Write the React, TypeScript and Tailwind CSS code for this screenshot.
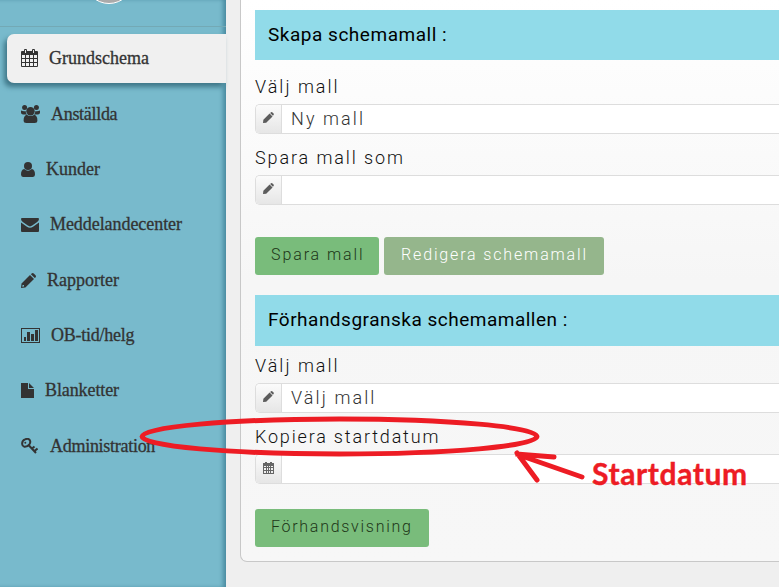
import React from 'react';

const ink = '#333333';

function Icon({ w, h, children }: { w: number; h: number; children: React.ReactNode }) {
  return (
    <svg width={w} height={h} viewBox={`0 0 ${w} ${h}`} fill={ink} className="block shrink-0">
      {children}
    </svg>
  );
}

const CalendarIcon = () => (
  <Icon w={17} h={18}>
    <path fillRule="evenodd" d="M1 2h2V1q0-1 1-1h1q1 0 1 1v1h5V1q0-1 1-1h1q1 0 1 1v1h2q1 0 1 1v14q0 1-1 1H1q-1 0-1-1V3q0-1 1-1zM4 1v3h1V1zM12 1v3h1V1zM1 6v3h3V6zM5 6v3h3V6zM9 6v3h3V6zM13 6v3h3V6zM1 10v3h3v-3zM5 10v3h3v-3zM9 10v3h3v-3zM13 10v3h3v-3zM1 14v3h3v-3zM5 14v3h3v-3zM9 14v3h3v-3zM13 14v3h3v-3z" />
  </Icon>
);

const GroupIcon = () => (
  <Icon w={19} h={18}>
    <circle cx="3.6" cy="2.6" r="2.5" />
    <circle cx="15.4" cy="2.6" r="2.5" />
    <path d="M0 5.4q2.5 1.2 4.6.6Q4.7 8 6 9.5H3.4Q0 9.5 0 7.5zM19 5.4q-2.5 1.2-4.6.6Q14.300 8 13 9.500h2.600Q19 9.500 19 7.500z" />
    <circle cx="9.5" cy="6.200" r="4.200" />
    <path d="M5.600 9.700Q9.500 12.400 13.400 9.700 16.400 10.600 16.400 15.500 16.400 18 13.600 18H5.400Q2.600 18 2.600 15.500 2.600 10.600 5.600 9.700z" />
  </Icon>
);

const UserIcon = () => (
  <Icon w={14} h={15}>
    <circle cx="7" cy="4" r="4" />
    <path d="M3.200 7Q7 10.400 10.800 7 14 7.500 14 12.600 14 15 12 15H2Q0 15 0 12.600 0 7.500 3.200 7z" />
  </Icon>
);

const MailIcon = () => (
  <Icon w={18} h={14}>
    <path d="M1 0h16q1 0 1 1 0 1.700-1.800 3l-5 3.600Q9 9.200 6.800 7.600L1.800 4Q0 2.700 0 1q0-1 1-1z" />
    <path d="M0 4.400l6 4.300q3 2.200 6 0l6-4.300V13q0 1-1 1H1q-1 0-1-1z" />
  </Icon>
);

const PencilIcon = () => (
  <Icon w={15} h={15}>
    <path fillRule="evenodd" d="M9 2l4 4L4.400 14.500 0 15l.5-4.400zM1.700 11.500L1.200 13.800 3 13.400V12H1.700zM9.900 1.200L10.600.6q1-1 2.200 0l1.700 1.700q1 1 0 2.100L13.800 5.100z" />
  </Icon>
);

const ChartIcon = () => (
  <Icon w={19} h={15}>
    <path fillRule="evenodd" d="M0 0h19v15H0zM1 1v13h17V1zM3 9h2v4H3zM6 4h3v9H6zM10 6h3v7h-3zM14 2h3v11h-3z" />
  </Icon>
);

const FileIcon = () => (
  <Icon w={13} h={15}>
    <path d="M0 0h7v6h6v9H0zM8 0l5 5H8z" />
  </Icon>
);

const KeyIcon = () => (
  <Icon w={17} h={16}>
    <path d="M1.200 6.200Q.8 2.800 4 1.400 7 0 8.700 2 10 4 8.400 6.300 6.400 9 3.300 8.700 1.300 8.200 1.200 6.200z" fill="none" stroke={ink} strokeWidth="2" />
    <path d="M7.500 7l7.500 8M11 10.500l2.500-2M13.500 13l3-2.500" fill="none" stroke={ink} strokeWidth="2" />
    <circle cx="4.300" cy="4.800" r="1" />
  </Icon>
);

function SmallPencil() {
  return (
    <svg width="11" height="11" viewBox="0 0 15 15" fill="#5c5c5c" className="mr-[1px] mb-[3px] block">
      <path fillRule="evenodd" d="M9 2l4 4L4.400 14.500 0 15l.5-4.400zM9.700 1.400L11 .4q1-.6 2 .2l1.400 1.400q.8 1 0 2L13.500 5.200z" />
    </svg>
  );
}

function SmallCalendar() {
  return (
    <svg width="11" height="12" viewBox="0 0 11 12" fill="#666" className="mb-[2px] block">
      <path fillRule="evenodd" d="M0 1h2V0h2v1h3V0h2v1h2v11H0zM1 4v1h2V4zM4 4v1h1V4zM6 4v1h1V4zM8 4v1h2V4zM1 6v2h2V6zM4 6v2h1V6zM6 6v2h1V6zM8 6v2h2V6zM1 9v2h2V9zM4 9v2h1V9zM6 9v2h1V9zM8 9v2h2V9z" />
    </svg>
  );
}

const items = [
  { text: 'Anställda', icon: <GroupIcon />, style: 'ml-[11px] tracking-[-0.3px]' },
  { text: 'Kunder', icon: <UserIcon />, style: 'ml-[11px]' },
  { text: 'Meddelandecenter', icon: <MailIcon />, style: 'ml-[11px] tracking-[-0.06px]' },
  { text: 'Rapporter', icon: <PencilIcon />, style: 'ml-[11px]' },
  { text: 'OB-tid/helg', icon: <ChartIcon />, style: 'ml-[11px] tracking-[-0.25px]' },
  { text: 'Blanketter', icon: <FileIcon />, style: 'ml-[11px] tracking-[-0.1px]' },
  { text: 'Administration', icon: <KeyIcon />, style: 'ml-[12px] tracking-[-0.28px]' },
];

function Field({ text, calendar }: { text?: string; calendar?: boolean }) {
  return (
    <div className="flex h-[30px] rounded-l-[5px] border border-r-0 border-[#dddddd] bg-white">
      <div className="flex w-[26px] shrink-0 items-center justify-center rounded-l-[4px] border-r border-[#dddddd] bg-linear-to-b from-[#fbfbfb] to-[#e6e6e6]">
        {calendar ? <SmallCalendar /> : <SmallPencil />}
      </div>
      <span className="pl-[9px] text-[18px] leading-[28px] font-light tracking-[2.1px] text-[#333]">{text}</span>
    </div>
  );
}

export default function App() {
  return (
    <div className="relative flex h-[587px] w-[779px] overflow-hidden bg-[#efefef] font-['Roboto',sans-serif]">
      <nav className="h-full w-[226px] shrink-0 bg-[#78bacc] font-['Liberation_Serif',serif] text-[18px] text-[#333] shadow-[inset_-4px_0_4px_-1px_#4a8ba0] [-webkit-text-stroke:0.3px_#333]">
        <div className="flex h-[27px] items-start justify-center border-b border-[#73a9b5] pr-[8px]">
          <div className="-mt-[46px] h-[50px] w-[50px] rounded-full border border-white bg-[#aaa]" />
        </div>
        <div className="mt-[7px] ml-[7px] flex h-[49px] items-center rounded-l-[7px] bg-[#f0f0f0] pl-[14px] shadow-[-3px_4px_5px_#3f7788]">
          <div className="mb-[2px]">
            <CalendarIcon />
          </div>
          <span className="ml-[11px]">Grundschema</span>
        </div>
        <div className="mt-[3.500px] pl-[21px]">
          {items.map((item) => (
            <div key={item.text} className="flex h-[55.330px] items-center">
              {item.icon}
              <span className={item.style}>{item.text}</span>
            </div>
          ))}
        </div>
      </nav>
      <main className="ml-[14px] h-[562px] flex-1 rounded-bl-[7px] border-b border-l border-[#c8c8c8] bg-linear-to-b from-white via-[#f6f6f6] via-50% to-[#f7f7f7] pt-[10px] pl-[14px]">
        <h2 className="h-[50px] bg-[#91dbe9] pl-[13px] text-[19px] leading-[49px] tracking-[0.52px] text-black">Skapa schemamall :</h2>
        <p className="h-[44px] pt-[17px] text-[18px] leading-[20px] font-light tracking-[2px] text-[#111]">Välj mall</p>
        <Field text="Ny mall" />
        <p className="h-[41px] pt-[14px] text-[18px] leading-[20px] font-light tracking-[1.900px] text-[#111]">Spara mall som</p>
        <Field />
        <div className="mt-[32px] flex gap-[5px] text-[16px] font-light">
          <button className="h-[38px] w-[124px] rounded-[3px] bg-[#79bc7b] pb-[2px] pl-[16px] text-left tracking-[1.900px] text-[#203618]">Spara mall</button>
          <button className="h-[38px] w-[220px] rounded-[3px] bg-[#95b68c] pb-[2px] pl-[17px] text-left tracking-[1.850px] text-white">Redigera schemamall</button>
        </div>
        <h2 className="mt-[20px] h-[51px] bg-[#91dbe9] pl-[13px] text-[19px] leading-[49px] tracking-[0.500px] text-black">Förhandsgranska schemamallen :</h2>
        <p className="h-[37px] pt-[10px] text-[18px] leading-[20px] font-light tracking-[2px] text-[#111]">Välj mall</p>
        <Field text="Välj mall" />
        <p className="h-[41px] pt-[14px] text-[18px] leading-[20px] font-light tracking-[1.820px] text-[#111]">Kopiera startdatum</p>
        <Field calendar />
        <button className="mt-[25px] block h-[38px] w-[174px] rounded-[3px] bg-[#79bc7b] pb-[2px] pl-[16px] text-left text-[16px] font-light tracking-[1.720px] text-[#203618]">Förhandsvisning</button>
      </main>
      <svg className="pointer-events-none absolute inset-0" width="779" height="587" fill="none" stroke="#ed1c24" strokeWidth="5" strokeLinecap="round">
        <ellipse cx="339.500" cy="436.500" rx="197.500" ry="17.500" />
        <path d="M582 477L516 454L554 457M517 453L537 480" />
      </svg>
      <span className="absolute top-[457px] left-[592px] font-['Lato',sans-serif] text-[30px] leading-[32px] font-bold tracking-[0.600px] text-[#ed1c24] [-webkit-text-stroke:0.4px_#ed1c24]">Startdatum</span>
    </div>
  );
}
